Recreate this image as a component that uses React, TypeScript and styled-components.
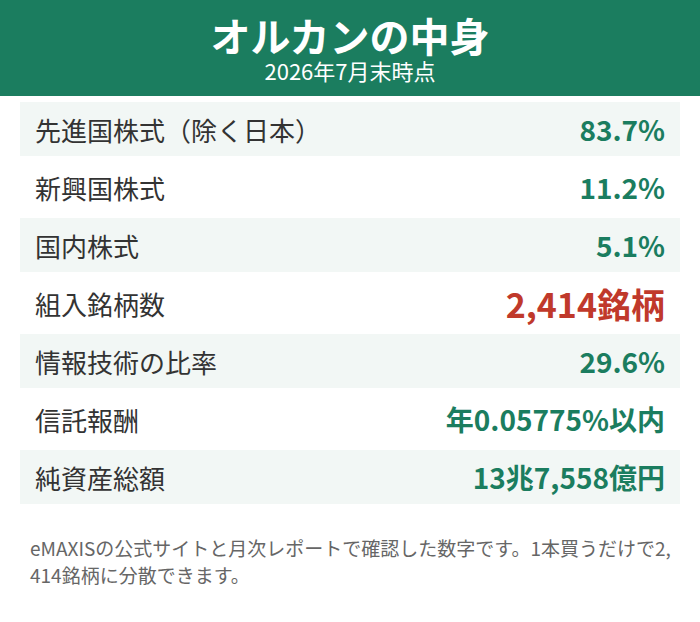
import React from "react";
import styled, { createGlobalStyle } from "styled-components";

const GlobalStyle = createGlobalStyle`
  html, body {
    margin: 0;
    padding: 0;
    background: #ffffff;
    font-family: "Noto Sans CJK JP", "Noto Sans", sans-serif;
  }
`;

const Page = styled.div`
  width: 700px;
  display: flex;
  flex-direction: column;
`;

const Header = styled.header`
  background: #1b7d5f;
  color: #ffffff;
  height: 96px;
  display: flex;
  flex-direction: column;
  align-items: center;
  justify-content: center;
`;

const Title = styled.h1`
  margin: 0;
  font-size: 40px;
  font-weight: 700;
  line-height: 44px;
`;

const Subtitle = styled.div`
  font-size: 22px;
  line-height: 26px;
  font-weight: 400;
`;

const Table = styled.div`
  display: flex;
  flex-direction: column;
  gap: 4px;
  padding: 6px 20px 0;
`;

const Row = styled.div<{ $shaded: boolean }>`
  height: 54px;
  display: flex;
  align-items: center;
  justify-content: space-between;
  padding: 0 15px;
  background: ${(p) => (p.$shaded ? "#f2f7f5" : "transparent")};
`;

const Label = styled.span`
  font-size: 26px;
  color: #333333;
`;

const Value = styled.span<{ $accent?: boolean }>`
  font-weight: 700;
  font-size: ${(p) => (p.$accent ? "34px" : "28px")};
  color: ${(p) => (p.$accent ? "#c0392b" : "#1b7d5f")};
`;

const Note = styled.p`
  margin: 30px 20px 0;
  padding: 0 0 0 10px;
  font-size: 19px;
  line-height: 27px;
  color: #666666;
  word-break: break-all;
`;

const rows: { label: string; value: string; accent?: boolean }[] = [
  { label: "先進国株式（除く日本）", value: "83.7%" },
  { label: "新興国株式", value: "11.2%" },
  { label: "国内株式", value: "5.1%" },
  { label: "組入銘柄数", value: "2,414銘柄", accent: true },
  { label: "情報技術の比率", value: "29.6%" },
  { label: "信託報酬", value: "年0.05775%以内" },
  { label: "純資産総額", value: "13兆7,558億円" },
];

export default function App() {
  return (
    <Page>
      <GlobalStyle />
      <Header>
        <Title>オルカンの中身</Title>
        <Subtitle>2026年7月末時点</Subtitle>
      </Header>
      <Table>
        {rows.map((r, i) => (
          <Row key={r.label} $shaded={i % 2 === 0}>
            <Label>{r.label}</Label>
            <Value $accent={r.accent}>{r.value}</Value>
          </Row>
        ))}
      </Table>
      <Note>
        eMAXISの公式サイトと月次レポートで確認した数字です。1本買うだけで2,414銘柄に分散できます。
      </Note>
    </Page>
  );
}
